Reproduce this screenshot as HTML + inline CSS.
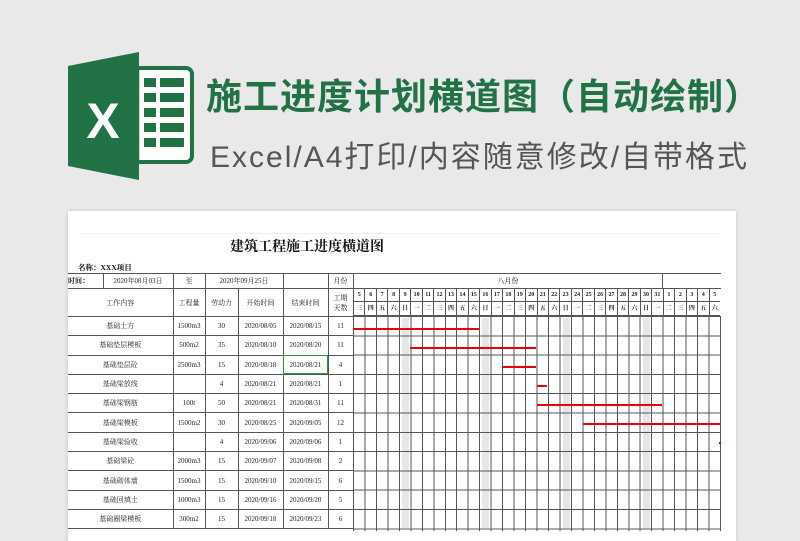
<!DOCTYPE html>
<html><head><meta charset="utf-8"><style>
*{margin:0;padding:0;box-sizing:border-box}
body{width:800px;height:526px;overflow:hidden;background:#e9e9e9;position:relative;font-family:"Liberation Serif","Noto Serif CJK SC",serif}
.abs{position:absolute}
.t1{left:206px;top:68px;font:bold 36px "Liberation Sans","Noto Sans CJK SC",sans-serif;color:#217346;letter-spacing:1px;white-space:nowrap}
.t2{left:210px;top:132px;font:30px "Liberation Sans","Noto Sans CJK SC",sans-serif;color:#555;white-space:nowrap;letter-spacing:2px}
.paper{left:68px;top:211px;width:668px;height:330px;background:#fff;box-shadow:0 0 4px rgba(0,0,0,.15)}
table{border-collapse:collapse;table-layout:fixed;position:absolute;left:68px;top:273px;font-size:7px;color:#222}
td{border:1px solid #555;text-align:center;padding:0;overflow:hidden;white-space:nowrap}
.grid{left:353px;top:316px;width:368px;height:215px;
background:repeating-linear-gradient(to bottom,#555 0 1px,transparent 1px 19.3px),repeating-linear-gradient(to right,#555 0 1px,transparent 1px 11.47px)}
.days{left:353px;top:288px;width:368px;height:28px;display:flex;font-size:6px;font-weight:bold;color:#222}
.days div{width:11.47px;border-left:1px solid #555;display:flex;flex-direction:column}
.days span{height:14px;line-height:14px;text-align:center;border-bottom:1px solid #555}
.sun{position:absolute;width:7px;background:#e6e6e6;top:318px;height:210px}
.bar{position:absolute;height:2px;background:#e8000b}
</style></head><body>
<svg class="abs" style="left:62px;top:52px" width="134" height="128" viewBox="0 0 134 128">
<rect x="64" y="16" width="66" height="94" rx="6" fill="#fff" stroke="#217346" stroke-width="4"/>
<rect x="62" y="18" width="16" height="90" fill="#cfcfcf"/>
<g fill="#217346"><rect x="82" y="26" width="12" height="9"/><rect x="98" y="26" width="24" height="9"/><rect x="82" y="41" width="12" height="9"/><rect x="98" y="41" width="24" height="9"/><rect x="82" y="56" width="12" height="9"/><rect x="98" y="56" width="24" height="9"/><rect x="82" y="71" width="12" height="9"/><rect x="98" y="71" width="24" height="9"/><rect x="82" y="86" width="12" height="9"/><rect x="98" y="86" width="24" height="9"/></g>
<g fill="#1a5e38"><rect x="66" y="26" width="10" height="9"/><rect x="66" y="41" width="10" height="9"/><rect x="66" y="56" width="10" height="9"/><rect x="66" y="71" width="10" height="9"/><rect x="66" y="86" width="10" height="9"/></g>
<polygon points="6,14 77,0 77,128 6,114" fill="#217346"/>
<text x="41" y="86" text-anchor="middle" font-family="Liberation Sans" font-weight="bold" font-size="50" fill="#fff">X</text>
</svg>
<div class="abs t1">施工进度计划横道图（自动绘制）</div>
<div class="abs t2">Excel/A4打印/内容随意修改/自带格式</div>
<div class="abs paper"></div>
<div class="abs" style="left:80px;top:233px;width:640px;height:1px;background:#eee"></div>
<div class="abs" style="left:230px;top:236px;font-weight:bold;font-size:14px;color:#111">建筑工程施工进度横道图</div>
<div class="abs" style="left:78px;top:262px;font-weight:bold;font-size:7.5px;color:#111">名称：XXX项目</div>
<table>
<colgroup><col style="width:35px"><col style="width:70px"><col style="width:32px"><col style="width:33px"><col style="width:45px"><col style="width:45px"><col style="width:25px"></colgroup>
<tr style="height:15px"><td style="border-left:none;text-align:left;font-weight:bold">时间：</td><td>2020年08月03日</td><td>至</td><td colspan="2">2020年09月25日</td><td></td><td>月份</td></tr>
<tr style="height:28px"><td colspan="2" style="border-left:none">工作内容</td><td>工程量</td><td>劳动力</td><td>开始时间</td><td>结束时间</td><td>工期<br>天数</td></tr>
<tr style="height:19.3px"><td colspan="2" style="border-left:none">基础土方</td><td>1500m3</td><td>30</td><td>2020/08/05</td><td>2020/08/15</td><td>11</td></tr>
<tr style="height:19.3px"><td colspan="2" style="border-left:none">基础垫层模板</td><td>500m2</td><td>35</td><td>2020/08/10</td><td>2020/08/20</td><td>11</td></tr>
<tr style="height:19.3px"><td colspan="2" style="border-left:none">基础垫层砼</td><td>2500m3</td><td>15</td><td>2020/08/18</td><td style="outline:1.5px solid #2a9a3a;outline-offset:-1px">2020/08/21</td><td>4</td></tr>
<tr style="height:19.3px"><td colspan="2" style="border-left:none">基础梁放线</td><td></td><td>4</td><td>2020/08/21</td><td>2020/08/21</td><td>1</td></tr>
<tr style="height:19.3px"><td colspan="2" style="border-left:none">基础梁钢筋</td><td>100t</td><td>50</td><td>2020/08/21</td><td>2020/08/31</td><td>11</td></tr>
<tr style="height:19.3px"><td colspan="2" style="border-left:none">基础梁模板</td><td>1500m2</td><td>30</td><td>2020/08/25</td><td>2020/09/05</td><td>12</td></tr>
<tr style="height:19.3px"><td colspan="2" style="border-left:none">基础梁验收</td><td></td><td>4</td><td>2020/09/06</td><td>2020/09/06</td><td>1</td></tr>
<tr style="height:19.3px"><td colspan="2" style="border-left:none">基础梁砼</td><td>2000m3</td><td>15</td><td>2020/09/07</td><td>2020/09/08</td><td>2</td></tr>
<tr style="height:19.3px"><td colspan="2" style="border-left:none">基础砌体墙</td><td>1500m3</td><td>15</td><td>2020/09/10</td><td>2020/09/15</td><td>6</td></tr>
<tr style="height:19.3px"><td colspan="2" style="border-left:none">基础回填土</td><td>1000m3</td><td>15</td><td>2020/09/16</td><td>2020/09/20</td><td>5</td></tr>
<tr style="height:19.3px"><td colspan="2" style="border-left:none">基础圈梁模板</td><td>300m2</td><td>15</td><td>2020/09/18</td><td>2020/09/23</td><td>6</td></tr>
</table>
<div class="abs" style="left:353px;top:273px;width:310px;height:16px;border:1px solid #555;font-size:7px;text-align:center;line-height:14px">八月份</div>
<div class="abs" style="left:662px;top:273px;width:59px;height:16px;border:1px solid #555;border-right:none"></div>
<div class="abs days">
<div><span>5</span><span>三</span></div><div><span>6</span><span>四</span></div><div><span>7</span><span>五</span></div><div><span>8</span><span>六</span></div><div><span>9</span><span>日</span></div><div><span>10</span><span>一</span></div><div><span>11</span><span>二</span></div><div><span>12</span><span>三</span></div><div><span>13</span><span>四</span></div><div><span>14</span><span>五</span></div><div><span>15</span><span>六</span></div><div><span>16</span><span>日</span></div><div><span>17</span><span>一</span></div><div><span>18</span><span>二</span></div><div><span>19</span><span>三</span></div><div><span>20</span><span>四</span></div><div><span>21</span><span>五</span></div><div><span>22</span><span>六</span></div><div><span>23</span><span>日</span></div><div><span>24</span><span>一</span></div><div><span>25</span><span>二</span></div><div><span>26</span><span>三</span></div><div><span>27</span><span>四</span></div><div><span>28</span><span>五</span></div><div><span>29</span><span>六</span></div><div><span>30</span><span>日</span></div><div><span>31</span><span>一</span></div><div><span>1</span><span>二</span></div><div><span>2</span><span>三</span></div><div><span>3</span><span>四</span></div><div><span>4</span><span>五</span></div><div><span>5</span><span>六</span></div>
</div>
<div class="sun" style="left:402px"></div><div class="sun" style="left:482px"></div><div class="sun" style="left:563px"></div><div class="sun" style="left:643px"></div>
<div class="abs grid"></div>
<div class="bar" style="left:354px;top:328px;width:125px"></div>
<div class="bar" style="left:410px;top:347px;width:126px"></div>
<div class="bar" style="left:502px;top:366px;width:34px"></div>
<div class="bar" style="left:537px;top:385px;width:10px"></div>
<div class="bar" style="left:537px;top:404px;width:125px"></div>
<div class="bar" style="left:583px;top:423px;width:137px"></div>
<div class="bar" style="left:719px;top:442px;width:2px"></div>
</body></html>
